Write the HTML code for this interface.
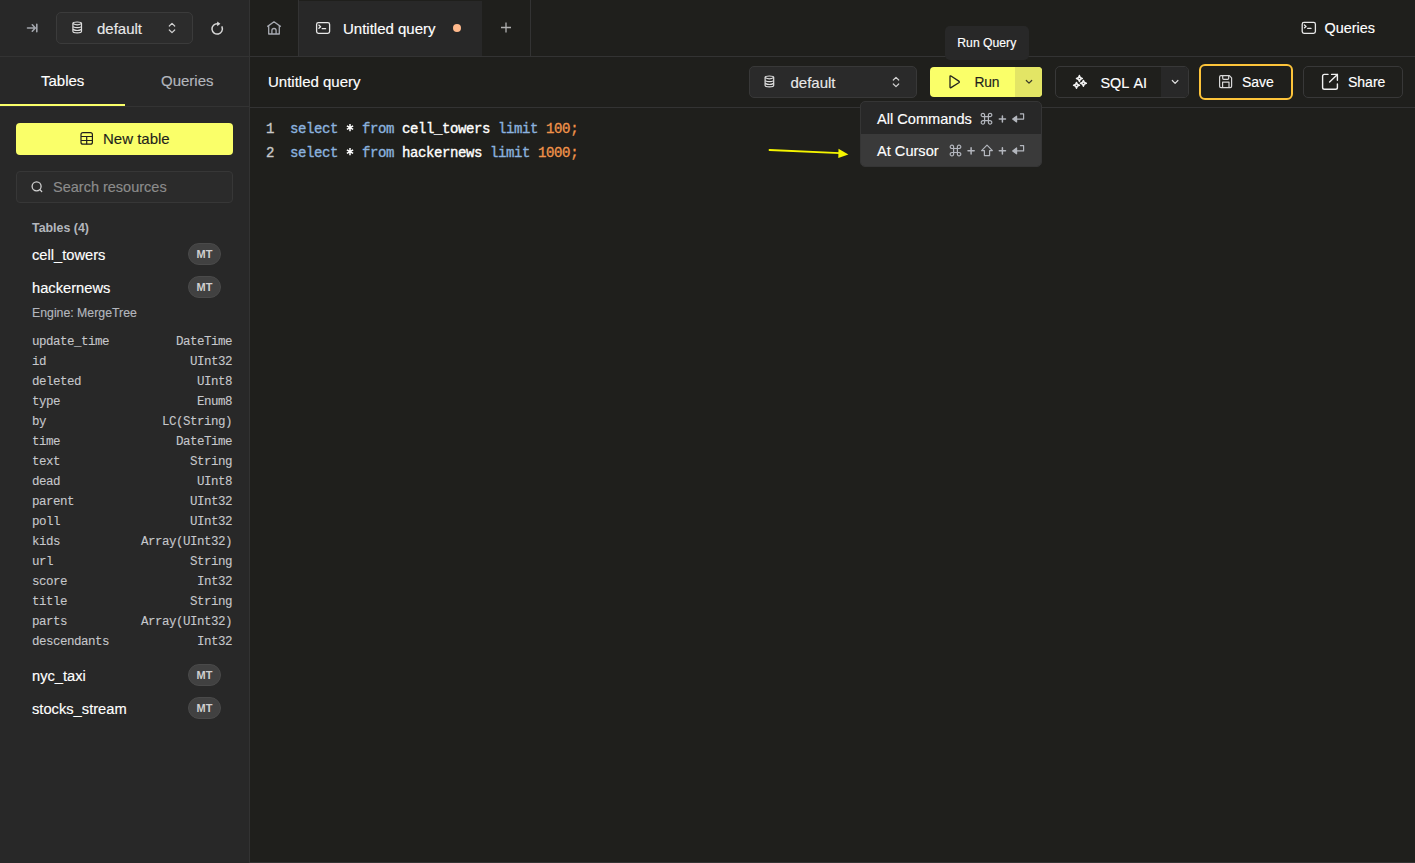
<!DOCTYPE html>
<html><head><meta charset="utf-8">
<style>
*{box-sizing:border-box;margin:0;padding:0}
html,body{width:1415px;height:863px;overflow:hidden;background:#1f1f1c;font-family:"Liberation Sans",sans-serif;color:#fff}
.a{position:absolute}
.t{position:absolute;white-space:nowrap;line-height:1;-webkit-text-stroke-width:0.15px}
.m{font-family:"Liberation Mono",monospace}
.col{font-size:12.5px;letter-spacing:-0.5px;color:#c6c7cb;-webkit-text-stroke-width:0.1px}
.code{white-space:pre;font-size:14px;letter-spacing:-0.4px;-webkit-text-stroke-width:0.35px}
.kw{color:#8bb2df}
.num{color:#f0924a}
.badge{position:absolute;left:188px;width:33px;height:22px;border-radius:11px;border:1px solid #4a4a4a;background:#414141;color:#cfcfcf;font-size:11px;font-weight:700;line-height:20px;text-align:center}
svg{position:absolute;overflow:visible}
.star{display:inline-block;width:7.6px;font-size:17px;position:relative;top:2.5px;letter-spacing:0;text-align:left;-webkit-text-stroke-width:0.5px}
</style></head><body>
<!-- sidebar background -->
<div class="a" style="left:0;top:0;width:249px;height:863px;background:#282828"></div>
<div class="a" style="left:249px;top:0;width:1px;height:863px;background:#333"></div>
<!-- bottom line -->
<div class="a" style="left:250px;top:862px;width:1165px;height:1px;background:#333"></div>
<!-- top bar -->
<div class="a" style="left:0;top:56px;width:1415px;height:1px;background:#333"></div>
<!-- tabs -->
<div class="a" style="left:298px;top:0;width:1px;height:56px;background:#333"></div>
<div class="a" style="left:299px;top:1px;width:183px;height:55px;background:#282828"></div>
<div class="a" style="left:530px;top:0;width:1px;height:56px;background:#333"></div>

<!-- collapse icon -->
<svg style="left:0;top:0" width="1" height="1"><g fill="none" stroke="#a3a6ad" stroke-width="1.6" stroke-linecap="round" stroke-linejoin="round">
<path d="M27.5 28H34.5M32.3 24.8L35.3 28L32.3 31.2M36.8 24.3V31.8"/></g></svg>
<!-- db select top -->
<div class="a" style="left:56px;top:12px;width:137px;height:32px;border:1px solid #3b3b3b;border-radius:5px;background:#2c2c2c"></div>
<svg style="left:0;top:0" width="1" height="1"><g fill="none" stroke="#dedede" stroke-width="1.2">
<g transform="translate(0 0)"><path d="M72.9 23.3Q72.9 22 77.2 22Q81.5 22 81.5 23.3V31.6Q81.5 32.9 77.2 32.9Q72.9 32.9 72.9 31.6Z"/><path d="M72.9 23.6Q77.2 26.2 81.5 23.6M72.9 26.8Q77.2 28.6 81.5 26.8M72.9 29.4Q77.2 31.6 81.5 29.4"/></g></g></svg>
<div class="t" style="left:97px;top:20.6px;font-size:15px;color:#e8e8e8">default</div>
<svg style="left:0;top:0" width="1" height="1"><g fill="none" stroke="#d0d0d0" stroke-width="1.2" stroke-linecap="round" stroke-linejoin="round">
<path d="M169.3 26L172 23.3L174.7 26M169.3 30L172 32.7L174.7 30"/></g></svg>
<!-- refresh -->
<svg style="left:0;top:0" width="1" height="1"><g fill="none" stroke="#d8d8d8" stroke-width="1.5" stroke-linecap="round">
<path d="M222 26.9A5.2 5.2 0 1 1 217.6 23.7"/></g><path d="M217.2 21.4L220.4 23.8L217.2 26.2Z" fill="#d8d8d8"/></svg>
<!-- home -->
<svg style="left:0;top:0" width="1" height="1"><g fill="none" stroke="#a8abb2" stroke-width="1.3" stroke-linejoin="round">
<path d="M267.3 26.6L274 21.8L280.8 26.6M268.7 25.6V34H279.3V25.6M271.9 34V30.6A2.1 2.1 0 0 1 276.1 30.6V34"/></g></svg>
<!-- terminal tab icon -->
<svg style="left:0;top:0" width="1" height="1"><g fill="none" stroke="#e8e8e8" stroke-width="1.3" stroke-linecap="round" stroke-linejoin="round">
<rect x="316.6" y="22.6" width="13" height="10.8" rx="1.8"/><path d="M318.8 25.1L320.6 26.7L318.9 28.2M322.2 28.7H325.6"/></g></svg>
<div class="t" style="left:343px;top:21px;font-size:15px;color:#fff">Untitled query</div>
<div class="a" style="left:452.8px;top:23.8px;width:8.5px;height:8.5px;border-radius:50%;background:#ffb98c"></div>
<!-- plus -->
<svg style="left:0;top:0" width="1" height="1"><g fill="none" stroke="#b0b0b0" stroke-width="1.3">
<path d="M501 27.5H511M506 22.5V32.5"/></g></svg>
<!-- right queries -->
<svg style="left:0;top:0" width="1" height="1"><g fill="none" stroke="#e8e8e8" stroke-width="1.3" stroke-linecap="round" stroke-linejoin="round">
<rect x="1302.2" y="22.4" width="13.2" height="10.9" rx="1.8"/><path d="M1304.4 25L1306.1 26.4L1304.5 27.8M1307.7 28.4H1311"/></g></svg>
<div class="t" style="left:1324.6px;top:21.3px;font-size:14.4px;color:#fff">Queries</div>

<!-- sidebar tabs -->
<div class="t" style="left:41px;top:73.3px;font-size:15px;color:#fff">Tables</div>
<div class="t" style="left:161px;top:73.3px;font-size:15px;color:#b3b6bd">Queries</div>
<div class="a" style="left:0;top:106px;width:249px;height:1px;background:#333"></div>
<div class="a" style="left:0;top:104px;width:125px;height:2px;background:#faff69"></div>

<!-- new table -->
<div class="a" style="left:16px;top:123px;width:217px;height:32px;border-radius:4px;background:#faff69"></div>
<svg style="left:0;top:0" width="1" height="1"><g fill="none" stroke="#1f1f1c" stroke-width="1.2">
<rect x="81" y="132.6" width="11.4" height="11.6" rx="2"/><path d="M81 136.5H92.4M81 140.5H92.4M86.7 136.5V144.2"/></g></svg>
<div class="t" style="left:103px;top:131px;font-size:15px;color:#1f1f1c">New table</div>
<!-- search -->
<div class="a" style="left:16px;top:171px;width:217px;height:32px;border:1px solid #373737;border-radius:4px;background:#2b2b2b"></div>
<svg style="left:0;top:0" width="1" height="1"><g fill="none" stroke="#d0d0d0" stroke-width="1.3" stroke-linecap="round">
<circle cx="36.6" cy="186.3" r="4.5"/><path d="M39.9 189.6L41.7 191.5"/></g></svg>
<div class="t" style="left:53px;top:179.5px;font-size:14.5px;color:#8c8c8c">Search resources</div>
<div class="t" style="left:32px;top:222.1px;font-size:12.4px;font-weight:700;-webkit-text-stroke-width:0;color:#b3b6bd">Tables (4)</div>
<div class="t" style="left:32px;top:248.1px;font-size:14.7px;color:#fff">cell_towers</div>
<div class="badge" style="top:243px">MT</div>
<div class="t" style="left:32px;top:280.8px;font-size:14.7px;color:#fff">hackernews</div>
<div class="badge" style="top:276px">MT</div>
<div class="t" style="left:32px;top:306.8px;font-size:12.3px;color:#b3b6bd">Engine: MergeTree</div>
<div class="t m col" style="left:32px;top:335.7px">update_time</div><div class="t m col" style="right:1183px;top:335.7px;text-align:right">DateTime</div>
<div class="t m col" style="left:32px;top:355.7px">id</div><div class="t m col" style="right:1183px;top:355.7px;text-align:right">UInt32</div>
<div class="t m col" style="left:32px;top:375.7px">deleted</div><div class="t m col" style="right:1183px;top:375.7px;text-align:right">UInt8</div>
<div class="t m col" style="left:32px;top:395.7px">type</div><div class="t m col" style="right:1183px;top:395.7px;text-align:right">Enum8</div>
<div class="t m col" style="left:32px;top:415.7px">by</div><div class="t m col" style="right:1183px;top:415.7px;text-align:right">LC(String)</div>
<div class="t m col" style="left:32px;top:435.7px">time</div><div class="t m col" style="right:1183px;top:435.7px;text-align:right">DateTime</div>
<div class="t m col" style="left:32px;top:455.7px">text</div><div class="t m col" style="right:1183px;top:455.7px;text-align:right">String</div>
<div class="t m col" style="left:32px;top:475.7px">dead</div><div class="t m col" style="right:1183px;top:475.7px;text-align:right">UInt8</div>
<div class="t m col" style="left:32px;top:495.7px">parent</div><div class="t m col" style="right:1183px;top:495.7px;text-align:right">UInt32</div>
<div class="t m col" style="left:32px;top:515.7px">poll</div><div class="t m col" style="right:1183px;top:515.7px;text-align:right">UInt32</div>
<div class="t m col" style="left:32px;top:535.7px">kids</div><div class="t m col" style="right:1183px;top:535.7px;text-align:right">Array(UInt32)</div>
<div class="t m col" style="left:32px;top:555.7px">url</div><div class="t m col" style="right:1183px;top:555.7px;text-align:right">String</div>
<div class="t m col" style="left:32px;top:575.7px">score</div><div class="t m col" style="right:1183px;top:575.7px;text-align:right">Int32</div>
<div class="t m col" style="left:32px;top:595.7px">title</div><div class="t m col" style="right:1183px;top:595.7px;text-align:right">String</div>
<div class="t m col" style="left:32px;top:615.7px">parts</div><div class="t m col" style="right:1183px;top:615.7px;text-align:right">Array(UInt32)</div>
<div class="t m col" style="left:32px;top:635.7px">descendants</div><div class="t m col" style="right:1183px;top:635.7px;text-align:right">Int32</div>
<div class="t" style="left:32px;top:668.8px;font-size:14.7px;color:#fff">nyc_taxi</div>
<div class="badge" style="top:664px">MT</div>
<div class="t" style="left:32px;top:701.8px;font-size:14.7px;color:#fff">stocks_stream</div>
<div class="badge" style="top:697px">MT</div>

<!-- editor toolbar -->
<div class="a" style="left:250px;top:107px;width:1165px;height:1px;background:#333"></div>
<div class="t" style="left:268px;top:74px;font-size:15px;color:#fff">Untitled query</div>

<!-- db select -->
<div class="a" style="left:749px;top:66px;width:168px;height:32px;border:1px solid #383838;border-radius:5px;background:#2a2a2a"></div>
<svg style="left:0;top:0" width="1" height="1"><g fill="none" stroke="#dedede" stroke-width="1.2">
<g transform="translate(692.2 54)"><path d="M72.9 23.3Q72.9 22 77.2 22Q81.5 22 81.5 23.3V31.6Q81.5 32.9 77.2 32.9Q72.9 32.9 72.9 31.6Z"/><path d="M72.9 23.6Q77.2 26.2 81.5 23.6M72.9 26.8Q77.2 28.6 81.5 26.8M72.9 29.4Q77.2 31.6 81.5 29.4"/></g></g></svg>
<div class="t" style="left:790.5px;top:75.2px;font-size:15px;color:#e8e8e8">default</div>
<svg style="left:0;top:0" width="1" height="1"><g fill="none" stroke="#d0d0d0" stroke-width="1.2" stroke-linecap="round" stroke-linejoin="round">
<path d="M893.3 80L896 77.3L898.7 80M893.3 84L896 86.7L898.7 84"/></g></svg>

<!-- run button -->
<div class="a" style="left:930px;top:67px;width:112px;height:30px;border-radius:4px;background:#faff69;overflow:hidden"><div class="a" style="left:85px;top:0;width:27px;height:30px;background:#e3e565"></div></div>
<svg style="left:0;top:0" width="1" height="1"><g fill="none" stroke="#24241e" stroke-width="1.3" stroke-linejoin="round">
<path d="M950 76.6Q950 75.4 951 76L958.8 81.1Q959.9 81.9 958.8 82.7L951 87.6Q950 88.3 950 87Z"/></g></svg>
<div class="t" style="left:974.5px;top:75.6px;font-size:13.8px;letter-spacing:-0.2px;color:#1f1f1c">Run</div>
<svg style="left:0;top:0" width="1" height="1"><g fill="none" stroke="#3a3a2a" stroke-width="1.2" stroke-linecap="round" stroke-linejoin="round">
<path d="M1026.3 80.5L1029 83.2L1031.7 80.5"/></g></svg>

<!-- SQL AI -->
<div class="a" style="left:1055px;top:66px;width:134px;height:32px;border:1px solid #383838;border-radius:5px;background:#1f1f1c;overflow:hidden"><div class="a" style="left:105px;top:0;width:28px;height:30px;background:#282828"></div></div>
<svg style="left:0;top:0" width="1" height="1"><g fill="none" stroke="#f2f2f2" stroke-width="1.5" stroke-linejoin="round"><path d="M1079.4 75.6Q1079.748 78.152 1082.3000000000002 78.5Q1079.748 78.848 1079.4 81.4Q1079.0520000000001 78.848 1076.5 78.5Q1079.0520000000001 78.152 1079.4 75.6Z"/><path d="M1076.5 82.39999999999999Q1076.848 84.952 1079.4 85.3Q1076.848 85.648 1076.5 88.2Q1076.152 85.648 1073.6 85.3Q1076.152 84.952 1076.5 82.39999999999999Z"/><path d="M1083.4 80.39999999999999Q1083.748 82.952 1086.3000000000002 83.3Q1083.748 83.648 1083.4 86.2Q1083.0520000000001 83.648 1080.5 83.3Q1083.0520000000001 82.952 1083.4 80.39999999999999Z"/></g></svg>
<div class="t" style="left:1100.5px;top:76px;font-size:14.4px;word-spacing:1.5px;color:#fff">SQL AI</div>
<svg style="left:0;top:0" width="1" height="1"><g fill="none" stroke="#e0e0e0" stroke-width="1.2" stroke-linecap="round" stroke-linejoin="round">
<path d="M1172.3 80.5L1175.1 83.3L1177.9 80.5"/></g></svg>

<!-- Save -->
<div class="a" style="left:1199px;top:64px;width:94px;height:36px;border:2px solid #fdc43a;border-radius:6px;background:#1f1f1c"></div>
<svg style="left:0;top:0" width="1" height="1"><g fill="none" stroke="#d8d8d8" stroke-width="1.2" stroke-linejoin="round">
<path d="M1221 75.6H1229.4L1231.6 77.8V86.2Q1231.6 87.6 1230.2 87.6H1221Q1219.6 87.6 1219.6 86.2V77Q1219.6 75.6 1221 75.6Z"/><path d="M1222.7 75.8V78.3Q1222.7 79.3 1223.7 79.3H1227.7Q1228.7 79.3 1228.7 78.3V75.8M1222.6 87.4V82.1H1229V87.4"/></g></svg>
<div class="t" style="left:1242px;top:74.6px;font-size:14px;color:#fff">Save</div>

<!-- Share -->
<div class="a" style="left:1303px;top:66px;width:100px;height:32px;border:1px solid #383838;border-radius:5px;background:#1f1f1c"></div>
<svg style="left:0;top:0" width="1" height="1"><g fill="none" stroke="#f0f0f0" stroke-width="1.4" stroke-linecap="round" stroke-linejoin="round">
<path d="M1328 74.4H1324.4Q1322.6 74.4 1322.6 76.2V87.4Q1322.6 89.2 1324.4 89.2H1335.6Q1337.4 89.2 1337.4 87.4V84M1329.6 82L1337.4 74.4M1331.6 74.4H1337.4V80.2"/></g></svg>
<div class="t" style="left:1348px;top:75.2px;font-size:14px;color:#fff">Share</div>

<!-- tooltip -->
<div class="a" style="left:945px;top:26px;width:84px;height:34px;border-radius:5px;background:#282828"></div>
<div class="t" style="left:957.3px;top:36.8px;font-size:12.2px;color:#fff">Run Query</div>

<!-- code -->
<div class="t m code" style="left:266px;top:122.3px;color:#c8c8c8">1</div>
<div class="t m code" style="left:266px;top:146.3px;color:#c8c8c8">2</div>
<div class="t m code" style="left:290px;top:122.3px;color:#fff"><span class="kw">select</span>   <span class="kw">from</span> cell_towers <span class="kw">limit</span> <span class="num">100</span><span class="num">;</span></div>
<div class="t m code" style="left:290px;top:146.3px;color:#fff"><span class="kw">select</span>   <span class="kw">from</span> hackernews <span class="kw">limit</span> <span class="num">1000</span><span class="num">;</span></div>

<svg style="left:0;top:0" width="1" height="1"><path d="M350.00 124.00L350.00 131.20M346.88 125.80L353.12 129.40M353.12 125.80L346.88 129.40M350.00 148.00L350.00 155.20M346.88 149.80L353.12 153.40M353.12 149.80L346.88 153.40" stroke="#fff" stroke-width="1.5" stroke-linecap="butt"/></svg>
<!-- dropdown -->
<div class="a" style="left:860px;top:101px;width:182px;height:66px;border:1px solid #353535;border-radius:5px;background:#282828;overflow:hidden"><div class="a" style="left:0;top:32px;width:180px;height:33px;background:#3a3a3a"></div></div>
<div class="t" style="left:877px;top:111.5px;font-size:14.6px;color:#fff">All Commands</div>
<div class="t" style="left:877px;top:144px;font-size:14.6px;color:#fff">At Cursor</div>
<svg style="left:0;top:0" width="1" height="1"><g fill="none" stroke="#b3b6bd" stroke-width="1.2" stroke-linecap="round" stroke-linejoin="round">
<g id="cmd"><path d="M953.6 148.5H957.4V152.5H953.6ZM953.6 148.5V146.9A1.7 1.7 0 1 0 951.9 148.5H953.6M957.4 148.5H959.1A1.7 1.7 0 1 0 957.4 146.9V148.5M957.4 152.5V154.1A1.7 1.7 0 1 0 959.1 152.5H957.4M953.6 152.5H951.9A1.7 1.7 0 1 0 953.6 154.1V152.5"/></g>
<path d="M968 150.8H974.2M971.1 147.7V153.9" stroke-width="1.5"/>
<path d="M987 145.2L981.6 150.6H984.4V155.6H989.6V150.6H992.4Z"/>
<path d="M999.3 150.8H1005.5M1002.4 147.7V153.9" stroke-width="1.5"/>
<path d="M1020.4 145.7H1023.6V150.9H1015.5"/><path d="M1012.7 150.9L1016.6 148V153.8Z" fill="#b3b6bd"/>
<use href="#cmd" x="31" y="-31.8"/>
<path d="M999.3 119H1005.5M1002.4 115.9V122.1" stroke-width="1.5"/>
<path d="M1020.4 113.9H1023.6V119.1H1015.5"/><path d="M1012.7 119.1L1016.6 116.2V122Z" fill="#b3b6bd"/>
</g></svg>

<!-- annotation arrow -->
<svg style="left:0;top:0" width="1" height="1"><path d="M769.5 150L840 153.2" stroke="#f5f500" stroke-width="1.8" stroke-linecap="round"/><path d="M838.5 148.8L848.4 154.5L838.3 158.1Z" fill="#f5f500"/></svg>
</body></html>
